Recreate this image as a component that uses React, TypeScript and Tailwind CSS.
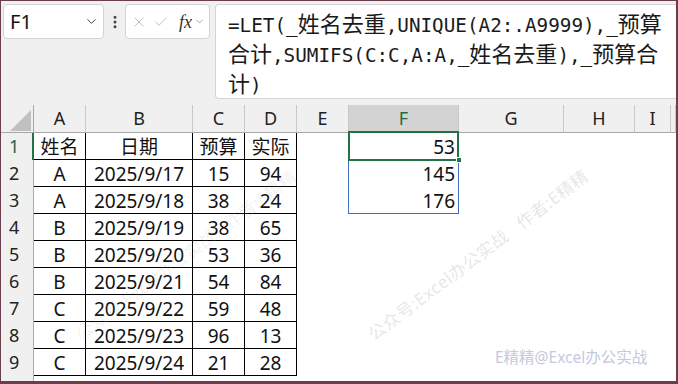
import React from 'react';
import { ChevronDown, EllipsisVertical, X, Check } from 'lucide-react';

const cols = ['A', 'B', 'C', 'D', 'E', 'F', 'G', 'H', 'I', ''];

const rows = [
  ['姓名', '日期', '预算', '实际'],
  ['A', '2025/9/17', '15', '94'],
  ['A', '2025/9/18', '38', '24'],
  ['B', '2025/9/19', '38', '65'],
  ['B', '2025/9/20', '53', '36'],
  ['B', '2025/9/21', '54', '84'],
  ['C', '2025/9/22', '59', '48'],
  ['C', '2025/9/23', '96', '13'],
  ['C', '2025/9/24', '21', '28'],
];

const spill = ['53', '145', '176'];

const formulaLines = [
  '=LET(_姓名去重,UNIQUE(A2:.A9999),_预算',
  '合计,SUMIFS(C:C,A:A,_姓名去重),_预算合',
  '计)',
];

// split a formula line into latin (mono) and CJK runs
function FormulaLine({ text }: { text: string }) {
  const parts = text.split(/([\u4e00-\u9fff]+)/).filter(Boolean);
  return (
    <div className="h-[30px] leading-[30px] whitespace-nowrap">
      {parts.map((p, i) =>
        /[\u4e00-\u9fff]/.test(p) ? (
          <span key={i} className="text-[22px] font-['Noto_Sans_CJK_SC',sans-serif]">
            {p}
          </span>
        ) : (
          <span key={i} className="text-[19.3px] font-['DejaVu_Sans_Mono',monospace]">
            {p}
          </span>
        )
      )}
    </div>
  );
}

function Watermark({ left, top, faint }: { left: number; top: number; faint?: boolean }) {
  return (
    <div
      className={
        faint
          ? 'absolute origin-bottom-left -rotate-[37deg] whitespace-nowrap text-[17px] tracking-[0.5px] text-[#9a9aaa]/15 pointer-events-none'
          : 'absolute origin-bottom-left -rotate-[37deg] whitespace-nowrap text-[17px] tracking-[0.5px] text-[#9a9aaa]/25 pointer-events-none'
      }
      style={{ left, top }}
    >
      公众号:Excel办公实战&nbsp;&nbsp;&nbsp;作者:E精精
    </div>
  );
}

export default function App() {
  return (
    <div className="w-[678px] h-[384px] overflow-hidden relative bg-white border-l border-t border-r-2 border-b-[3px] border-[#6b3e4d] font-['Noto_Sans','Noto_Sans_CJK_SC',sans-serif] text-[#111]">
      {/* toolbar */}
      <div className="h-[104px] bg-[#f0f0f0] flex items-start pt-[3px] pl-[2px]">
        <div className="w-[101px] h-[35px] bg-white rounded-[4px] border border-[#d4d4d4] flex items-center justify-between pl-[6px] pr-[4px]">
          <span className="text-[20px]">F1</span>
          <ChevronDown className="w-[15px] h-[15px] text-[#444]" strokeWidth={1.6} />
        </div>
        <div className="w-[21px] h-[35px] flex items-center justify-center">
          <EllipsisVertical className="w-[16px] h-[16px] text-[#444]" strokeWidth={2.5} />
        </div>
        <div className="w-[85px] h-[35px] bg-white rounded-[4px] border border-[#d4d4d4] flex items-center pl-[5px] gap-[6px]">
          <X className="w-[16px] h-[16px] text-[#b5b5b5]" strokeWidth={1.3} />
          <Check className="w-[16px] h-[16px] text-[#b5b5b5]" strokeWidth={1.3} />
          <span className="italic text-[18px] font-['Liberation_Serif',serif] text-[#333] ml-[4px] leading-none">fx</span>
          <ChevronDown className="w-[11px] h-[11px] text-[#888] -ml-[4px]" strokeWidth={1.6} />
        </div>
        <div className="flex-1 ml-[5px] h-[95px] bg-white rounded-l-[4px] border-l border-t border-b border-[#d4d4d4] pl-[12px] pt-[2px] text-[#1a1a1a]">
          {formulaLines.map((l, i) => (
            <FormulaLine key={i} text={l} />
          ))}
        </div>
      </div>

      {/* sheet */}
      <div className="grid grid-cols-[33px_52px_107px_52px_52px_52px_110px_105px_71px_36px_1fr] text-[19px]">
        {/* header row */}
        <div className="h-[28px] bg-[#f0f0f0] border-r border-b border-[#a8a8a8] relative">
          <svg className="absolute left-[9px] top-[5px]" width="21" height="21" viewBox="0 0 21 21">
            <polygon points="0,21 21,0 21,21" fill="#c0c0c0" />
          </svg>
        </div>
        {cols.map((c, i) => (
          <div
            key={i}
            className={
              c === 'F'
                ? 'h-[28px] bg-[#d3d3d3] border-r border-b border-r-[#c8c8c8] border-b-[#a8a8a8] flex items-center justify-center text-[18px] text-[#1d6b40]'
                : 'h-[28px] bg-[#f0f0f0] border-r border-b border-r-[#c8c8c8] border-b-[#a8a8a8] flex items-center justify-center text-[18px] text-[#222]'
            }
          >
            {c}
          </div>
        ))}

        {/* body rows */}
        {Array.from({ length: 10 }).map((_, r) => (
          <React.Fragment key={r}>
            <div
              className={
                r === 0
                  ? 'h-[27px] bg-[#f0f0f0] border-r-2 border-r-[#217346] flex items-center pl-[8px] text-[18px] text-[#2b5e40]'
                  : 'h-[27px] bg-[#f0f0f0] border-r border-r-[#a8a8a8] flex items-center pl-[8px] text-[18px] text-[#222]'
              }
            >
              {r + 1}
            </div>
            {cols.map((c, ci) => {
              const inTable = r < 9 && ci < 4;
              if (inTable) {
                return (
                  <div
                    key={ci}
                    className="h-[27px] border-r border-b border-black flex items-center justify-center pt-[2px] leading-none"
                  >
                    {rows[r][ci]}
                  </div>
                );
              }
              if (c === 'F' && r < 3) {
                return (
                  <div key={ci} className="h-[27px] flex items-center justify-end pr-[4px] pt-[2px] leading-none">
                    {spill[r]}
                  </div>
                );
              }
              return <div key={ci} className="h-[27px]" />;
            })}
          </React.Fragment>
        ))}
      </div>

      {/* spill range + active cell */}
      <div className="absolute left-[347px] top-[130px] w-[111px] h-[83px] border border-[#3f6fbf]" />
      <div className="absolute left-[347px] top-[130px] w-[111px] h-[30px] border-2 border-[#217346]" />
      <div className="absolute left-[455px] top-[156px] w-[6px] h-[6px] bg-[#217346] border border-white" />

      {/* watermarks */}
      <Watermark left={377} top={320} />
      <Watermark left={85} top={320} faint />
      <div className="absolute left-[494px] top-[345px] text-[15.5px] text-[#c5c9de] whitespace-nowrap">
        E精精@Excel办公实战
      </div>
    </div>
  );
}
